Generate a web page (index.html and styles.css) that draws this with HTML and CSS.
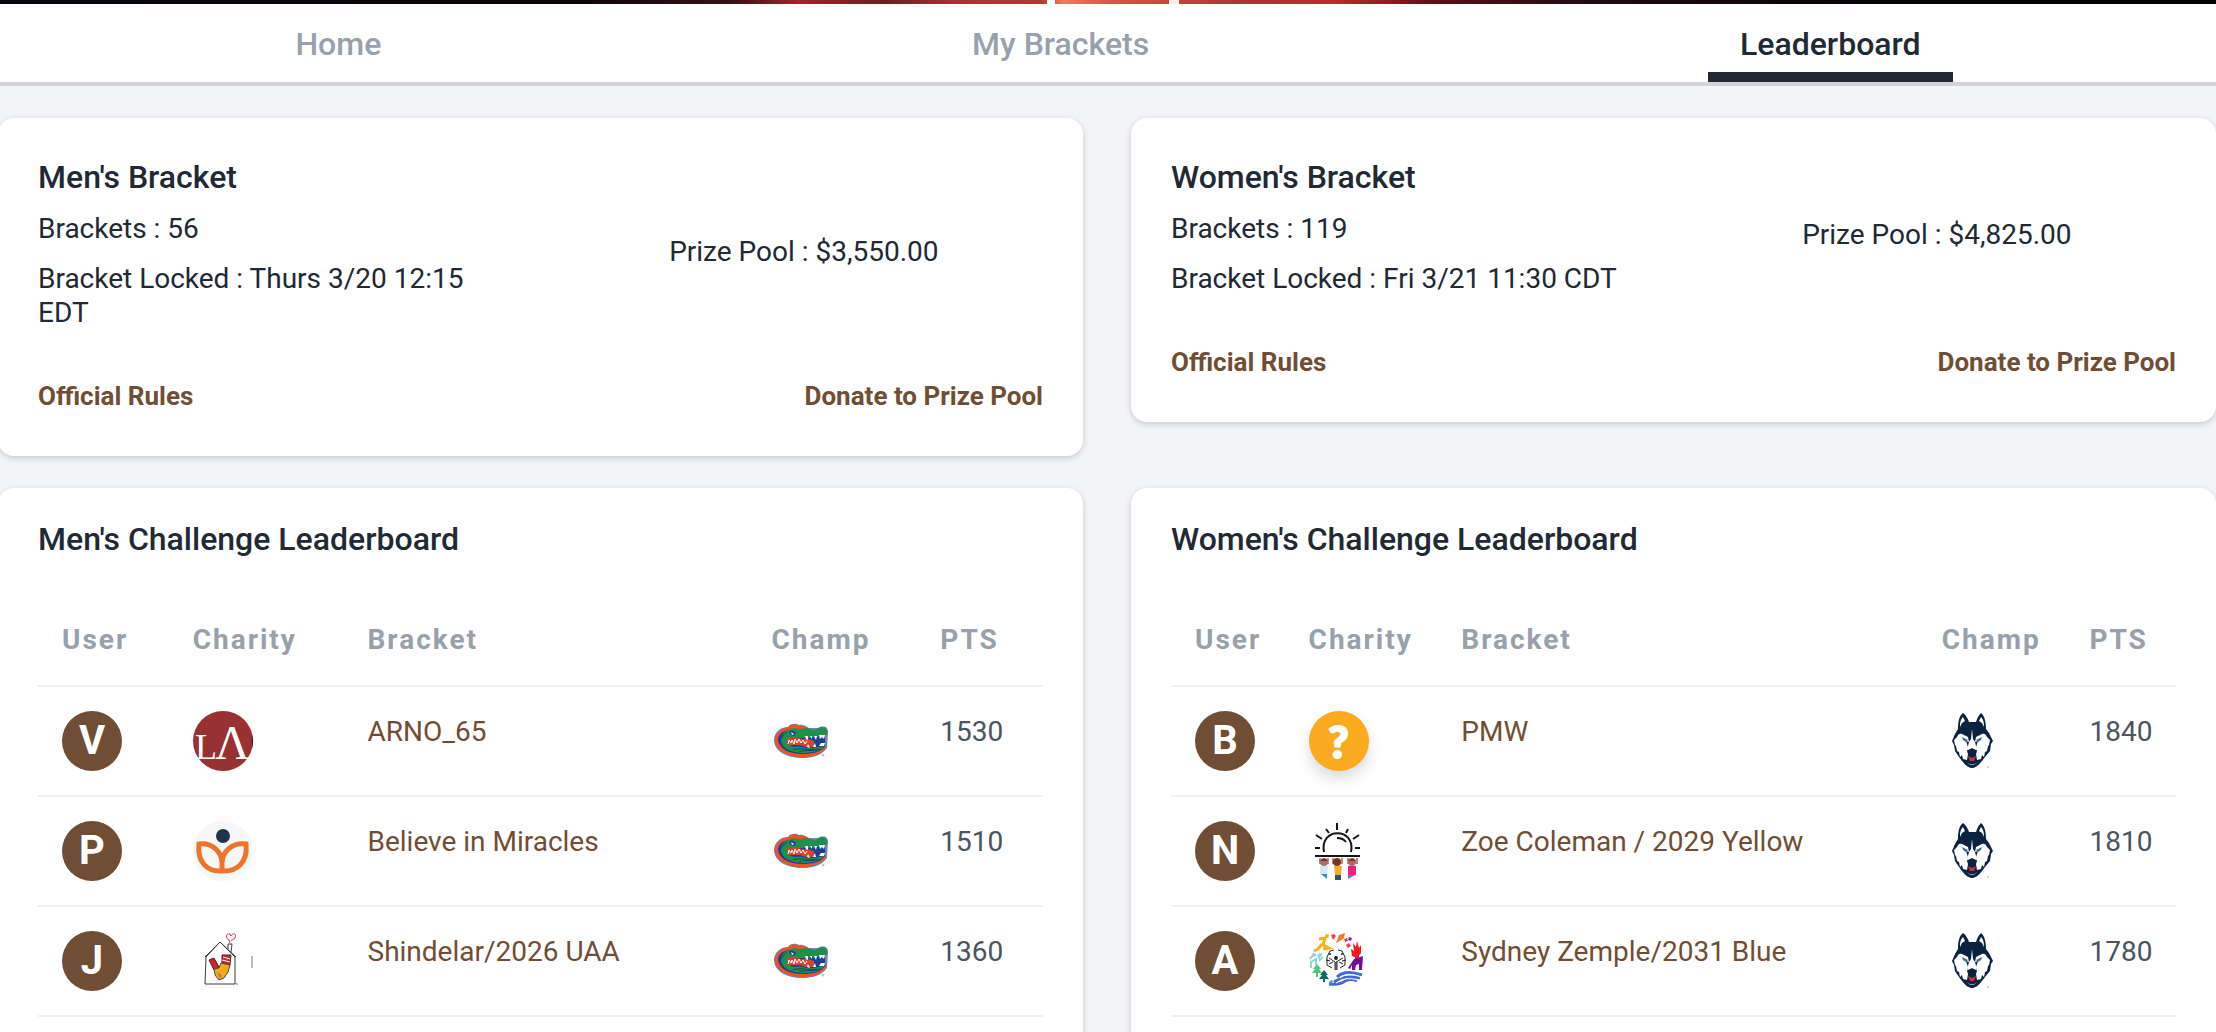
FILE: index.html
```html
<!DOCTYPE html>
<html lang="en">
<head>
  <meta charset="utf-8">
  <title>Leaderboard</title>
  <link rel="stylesheet" href="styles.css">
</head>
<body>
  <!-- shared logos -->
  <svg class="sprite" aria-hidden="true">
    <symbol id="gator" viewBox="0 0 60 60">
      <path d="M16 16 C18 12 24 12 27 14 C30 13 34 15 37 17 L46 17 C52 14 56 16 56 21 L55 37 C49 45 40 47 30 47 C15 47 2 40 2 29 C2 22 8 16 16 16Z" fill="#6f83b5"/>
      <path d="M17 16 C19 13 24 13 27 15 C30 14 35 16 37 18 L44 20 L52 30 L54 36 C49 44 40 46 30 46 C16 46 3 39 3 29 C3 23 9 17 17 16Z" fill="#f4511f"/>
      <path d="M17 19 C10 20 6 24 6 29 C7 38 18 43 30 43 C41 43 49 41 53 35 L53 26 L30 20Z" fill="#1d3f94"/>
      <path d="M9 29 C9 23 12 20 19 18 C23 16 26 19 30 18 C35 15 39 19 43 19 L49 16 C54 16 56 19 55 23 C53 26 48 25 45 26 L38 27 L17 27 C15 32 18 36 23 36 C28 34 33 38 41 37 L52 35 C49 40 41 42 30 42 C18 41 9 37 9 29Z" fill="#1f8f4c"/>
      <path d="M15 27 L22 26 L30 28 L36 28 L42 30 L42 36 L34 36 L28 34 L17 34Z" fill="#d9432f"/>
      <path d="M43 28 L53 25 L52 33 L43 34Z" fill="#1d3f94"/>
      <path d="M16 33 l1-4 2 3 1-3 2 4 1-5 2 4 2-4 2 4 2-3 2 4 2-3" fill="none" stroke="#fff" stroke-width="1"/>
      <path d="M33 25 h3 v4 l-2-1Z M38 25 h2 v3Z M42 25 h3 l-1 4Z M47 24 h6 l-1 4 -2-2 -2 2Z M35 36 l1-3 2 4Z M41 36 l2-4 1 4Z M47 35 l2-3 4 0 -1 3Z" fill="#fff"/>
      <path d="M17 21 C19 18 22 20 24 22 L22 25 L19 24Z" fill="#1d3f94"/>
      <path d="M19 21 l3 2 -2 1Z" fill="#fff"/>
      <path d="M9 28 Q11 23 15 21 M21 39 C28 36 36 40 46 38 M27 41 C34 38 42 41 49 38" fill="none" stroke="#174a70" stroke-width="1"/>
      <circle cx="51" cy="44" r="1" fill="none" stroke="#aab4cc" stroke-width="1"/>
    </symbol>

    <symbol id="husky" viewBox="0 0 60 60">
      <path d="M21 2 C24 4 26 8 27 11 H34 C35 7 37 4 39 2 C43 5 44 12 44 18 L47 22 L51 30 L49 33 L48 40 L43 46 L40 50 C36 55 33 57 30 57 C27 57 24 55 20 50 L17 46 L13 40 L12 34 L10 30 L13 23 L16 18 C16 11 17 5 21 2Z" fill="#0c2340"/>
      <path d="M21 6 C18 9 18 13 18 16 L20 12 L23 10Z M39 6 C42 9 42 13 42 16 L40 12 L37 10Z" fill="#fff"/>
      <path d="M30 18 L31 28 L33 31 L35 39 L32 39 L30 37 L28 39 L25 39 L27 31 L29 28Z" fill="#fff"/>
      <path d="M20 23 L26 26 L27 31 L24 30 L26 36 L25 40 L26 43 L25 49 L21 48 L20 44 L18 46 L17 41 L15 40 L14 35 L13 34 L12 29 L15 26 C16 23 18 22 20 23Z" fill="#fff"/>
      <path d="M40 23 L34 26 L33 31 L36 30 L34 36 L35 40 L34 43 L35 49 L39 48 L40 44 L42 46 L43 41 L45 40 L46 35 L47 34 L48 29 L45 26 C44 23 42 22 40 23Z" fill="#fff"/>
      <path d="M20 26 L26 29 L24 31 L21 29Z M40 26 L34 29 L36 31 L39 29Z" fill="#41708f"/>
      <path d="M26 39 Q30 36 34 39 L32 43 L30 44 L28 43Z" fill="#0c2340"/>
      <path d="M25 51 Q30 56 35 51 L33 53 Q30 55 27 53Z" fill="#fff"/>
      <path d="M26 45 L30 47 L34 45 L32 50 H28Z" fill="#c9303e"/>
      <path d="M45 56 h2" stroke="#aab0b8" stroke-width="1"/>
    </symbol>
  </svg>

  <div class="hero"></div>

  <nav class="tabs">
    <a href="#home">Home</a>
    <a href="#brackets">My Brackets</a>
    <a href="#leaderboard" class="active">Leaderboard</a>
  </nav>

  <main class="board">
    <section class="card summary">
      <div class="summary-top">
        <div class="info">
          <h2>Men's Bracket</h2>
          <p>Brackets : 56</p>
          <p>Bracket Locked : Thurs 3/20 12:15 EDT</p>
        </div>
        <div class="pool">Prize Pool : $3,550.00</div>
      </div>
      <div class="links">
        <a href="#rules">Official Rules</a>
        <a href="#donate">Donate to Prize Pool</a>
      </div>
    </section>

    <section class="card summary">
      <div class="summary-top">
        <div class="info">
          <h2>Women's Bracket</h2>
          <p>Brackets : 119</p>
          <p>Bracket Locked : Fri 3/21 11:30 CDT</p>
        </div>
        <div class="pool">Prize Pool : $4,825.00</div>
      </div>
      <div class="links">
        <a href="#rules">Official Rules</a>
        <a href="#donate">Donate to Prize Pool</a>
      </div>
    </section>

    <section class="card standings">
      <h2>Men's Challenge Leaderboard</h2>
      <table class="men">
        <colgroup><col class="c-user"><col class="c-charity"><col class="c-bracket"><col class="c-champ"><col class="c-pts"></colgroup>
        <thead>
          <tr><th>User</th><th>Charity</th><th>Bracket</th><th>Champ</th><th>PTS</th></tr>
        </thead>
        <tbody>
          <tr>
            <td><span class="avatar">V</span></td>
            <td>
              <svg class="charity" viewBox="0 0 60 60">
                <circle cx="30" cy="30" r="30" fill="#983132"/>
                <path d="M59 24 Q61 30 59 37Z" fill="#2a1010"/>
                <text class="la" x="2" y="48" font-size="36">L</text>
                <text class="la" x="22" y="48" font-size="48">Λ</text>
              </svg>
            </td>
            <td><a href="#b1">ARNO_65</a></td>
            <td><svg class="champ"><use href="#gator"/></svg></td>
            <td>1530</td>
          </tr>
          <tr>
            <td><span class="avatar">P</span></td>
            <td>
              <svg class="charity" viewBox="0 0 60 60">
                <circle cx="30" cy="30" r="30" fill="#f7f7f8"/>
                <circle cx="30" cy="15" r="7" fill="#1d334f"/>
                <path d="M29 50 C14 51 4 41 6 23 C19 21 29 31 29 42 C29 31 39 21 53 23 C55 41 44 51 29 50Z M29 41 L29 50" fill="none" stroke="#ee742b" stroke-width="5"/>
              </svg>
            </td>
            <td><a href="#b2">Believe in Miracles</a></td>
            <td><svg class="champ"><use href="#gator"/></svg></td>
            <td>1510</td>
          </tr>
          <tr>
            <td><span class="avatar">J</span></td>
            <td>
              <svg class="charity" viewBox="0 0 60 60">
                <path d="M12 53 L13 26 L27 11 L42 26 L42 53Z M12 26 L27 11 L43 26 M35 18 L35 13 L39 13 L38 21" fill="none" stroke="#3b3b3b" stroke-width="1"/>
                <path d="M37 12 L36 9 C32 7 33 2 37 3 L38 5 C40 1 44 3 42 7 L38 10" fill="none" stroke="#ec3347" stroke-width="1"/>
                <path d="M16 29 L21 27 L26 36 L21 39Z M29 24 L38 24 L37 34 L29 32Z" fill="#d3222d" stroke="#4d2525" stroke-width="1"/>
                <path d="M30 26 L37 28 M29 29 L37 31" stroke="#fff" stroke-width="1"/>
                <path d="M21 38 L26 37 L28 32 L37 34 L35 41 L31 47 L26 49 L22 44Z" fill="#f2a91c" stroke="#5a4635" stroke-width="1"/>
                <path d="M24 41 L29 44 L27 48Z" fill="#a48764"/>
                <path d="M43 53 L45 53 M59 25 L59 37" stroke="#777" stroke-width="1"/>
              </svg>
            </td>
            <td><a href="#b3">Shindelar/2026 UAA</a></td>
            <td><svg class="champ"><use href="#gator"/></svg></td>
            <td>1360</td>
          </tr>
        </tbody>
      </table>
    </section>

    <section class="card standings">
      <h2>Women's Challenge Leaderboard</h2>
      <table class="women">
        <colgroup><col class="c-user"><col class="c-charity"><col class="c-bracket"><col class="c-champ"><col class="c-pts"></colgroup>
        <thead>
          <tr><th>User</th><th>Charity</th><th>Bracket</th><th>Champ</th><th>PTS</th></tr>
        </thead>
        <tbody>
          <tr>
            <td><span class="avatar">B</span></td>
            <td><span class="avatar unknown">?</span></td>
            <td><a href="#b4">PMW</a></td>
            <td><svg class="champ"><use href="#husky"/></svg></td>
            <td>1840</td>
          </tr>
          <tr>
            <td><span class="avatar">N</span></td>
            <td>
              <svg class="charity" viewBox="0 0 60 60">
                <path d="M15 31 C10 6 47 6 42 31 M28 17 Q34 17 37 21 M28 2 V9 M17 8 L20 12 M39 8 L37 12 M7 14 L13 18 M50 14 L44 18 M6 27 H11 M46 27 H51" fill="none" stroke="#151515" stroke-width="2"/>
                <path d="M6 35 H51" stroke="#151515" stroke-width="2"/>
                <path d="M11 37 V43 M19 37 V43 M24 37 V43 M33 37 V43 M39 37 V43 M48 37 V43" stroke="#c98677" stroke-width="2"/>
                <path d="M11 45 H19 L18 56 L11 53Z" fill="#d5e8f6"/>
                <path d="M12 53 H18 V58Z" fill="#3f8db5"/>
                <path d="M25 45 H33 L32 54 H26Z" fill="#f7ad2d"/>
                <path d="M26 54 H32 V59 H26Z" fill="#345269"/>
                <path d="M39 45 H47 V54 H39Z" fill="#ef1d86"/>
                <path d="M39 54 H46 L39 58Z" fill="#3f8db5"/>
                <circle cx="15" cy="41" r="4" fill="#a6716b"/>
                <circle cx="28" cy="41" r="4" fill="#6e3a25"/>
                <circle cx="43" cy="41" r="4" fill="#b0686a"/>
                <path d="M11 40 Q15 35 19 40Z M39 40 Q43 35 47 40Z" fill="#6e3a35"/>
              </svg>
            </td>
            <td><a href="#b5">Zoe Coleman / 2029 Yellow</a></td>
            <td><svg class="champ"><use href="#husky"/></svg></td>
            <td>1810</td>
          </tr>
          <tr>
            <td><span class="avatar">A</span></td>
            <td>
              <svg class="charity" viewBox="0 0 60 60">
                <g fill="none" stroke="#f7b11a" stroke-width="3"><path d="M10 8 L16 7 L14 14 L20 17 L14 18 M13 13 L9 18 L5 20"/></g>
                <circle cx="18" cy="5" r="2" fill="#f7b11a"/>
                <path d="M22 4 l3-1 2 2 -3 4Z" fill="#ee4056"/>
                <path d="M27 12 L30 4 L36 2 L35 7 L31 10Z" fill="#f47b20"/>
                <path d="M40 6 l3 1 -1 3 -3-1Z" fill="#7d2aa3"/>
                <path d="M37 14 l3-2 2 3 -3 2Z M35 8 l3-1 1 3 -3 1Z" fill="#ee4056"/>
                <path d="M42 18 L45 20 L44 12 L47 16 L48 10 L50 17 L52 14 L52 22 L48 27 L43 25Z M46 25 H50 V28 H46Z" fill="#f4191c"/>
                <path d="M39 37 L45 28 L54 25 L53 39 H50 V33 L47 34 L46 39 H43 V34 L41 38Z" fill="#71109a"/>
                <path d="M28 46 Q36 38 53 44 M25 51 Q37 43 51 47 M20 53 Q32 54 36 50 Q42 47 48 50" fill="none" stroke="#4668d8" stroke-width="3"/>
                <path d="M31 47 Q37 41 53 46 M27 52 Q36 45 49 49" fill="none" stroke="#fff" stroke-width="1"/>
                <path d="M1 28 L4 24 L7 24 M2 30 V37 M2 31 L7 28 V34 M9 24 L11 29 L14 26" fill="none" stroke="#8ddbd0" stroke-width="2"/>
                <circle cx="5" cy="24" r="2" fill="#8ddbd0"/><circle cx="11" cy="24" r="2" fill="#8ddbd0"/>
                <path d="M8 33 L12 38 H10 L13 42 H9 V46 H7 V42 H3 L6 38 H4Z" fill="#55c47d"/>
                <path d="M15 39 L19 44 H17 L20 48 H16 V51 H14 V48 H10 L13 44 H11Z" fill="#096b5b"/>
                <path d="M20 51 l3-2 1 2 -3 2Z" fill="#25afb2"/>
                <g fill="none" stroke="#222" stroke-width="1"><path d="M26 39 V31 L20 27 M27 39 V31 L34 27 M28 39 V31 M23 37 L18 34 V26 L21 20 L25 19 M31 37 L36 34 V26 L33 20 L29 19 M20 33 L24 31 M34 33 L30 31 M17 29 L21 30 M37 29 L33 30"/></g>
                <circle cx="27" cy="27" r="2" fill="#222"/><circle cx="21" cy="23" r="1" fill="#222"/><circle cx="33" cy="23" r="1" fill="#222"/>
              </svg>
            </td>
            <td><a href="#b6">Sydney Zemple/2031 Blue</a></td>
            <td><svg class="champ"><use href="#husky"/></svg></td>
            <td>1780</td>
          </tr>
        </tbody>
      </table>
    </section>
  </main>
</body>
</html>
```
FILE: styles.css
```css
* {
  box-sizing: border-box;
}

body {
  margin: 0;
  background: #f3f4f7;
  color: #212934;
  font-family: Roboto, sans-serif;
  font-size: 28px;
  line-height: 34px;
  overflow-x: hidden;
}

a {
  color: #704e35;
  text-decoration: none;
}

h2 {
  margin: 0;
  font-size: 32px;
  font-weight: 500;
  line-height: 38px;
}

.sprite {
  display: none;
}

.hero {
  height: 4px;
  background:
    linear-gradient(#fff, #fff) 47.4% 0 / 8px 4px no-repeat,
    linear-gradient(#f6eee6, #f6eee6) 53% 0 / 10px 4px no-repeat,
    linear-gradient(90deg, #08040f 0%, #0b0408 26%, #3a1016 33%, #98282b 36%, #6c1d1f 40%, #a23434 43%, #a93d32 47%, #fa7460 48%, #dc5546 50%, #cf4a39 52%, #ab3436 56%, #c02c28 60%, #571019 65%, #200a12 72%, #060308 84%, #000 100%);
}

.tabs {
  display: flex;
  justify-content: space-around;
  height: 82px;
  background: #fff;
  border-bottom: 4px solid #d2d4d8;
}

.tabs a {
  padding: 21px 32px 0;
  border-bottom: 10px solid transparent;
  color: #97a1ab;
  font-size: 32px;
  font-weight: 500;
  line-height: 38px;
}

.tabs a.active {
  color: #212934;
  border-bottom-color: #212934;
}

.board {
  display: grid;
  grid-template-columns: 1fr 1fr;
  gap: 32px 48px;
  align-items: start;
  margin: 32px 0 32px -2px;
}

.card {
  background: #fff;
  border-radius: 16px;
  box-shadow: 0 2px 6px rgba(30, 35, 60, 0.2);
}

.summary {
  padding: 40px;
}

.summary-top {
  display: grid;
  grid-template-columns: 62.8% 1fr;
  align-items: center;
}

.info {
  padding-right: 168px;
}

.info h2 {
  margin-bottom: 16px;
}

.info p {
  margin: 0 0 16px;
}

.links {
  display: flex;
  justify-content: space-between;
  margin-top: 30px;
  font-size: 26px;
  font-weight: 700;
  line-height: 40px;
}

.standings {
  padding: 32px 40px;
}

.standings h2 {
  margin-bottom: 37px;
}

table {
  width: 100%;
  border-collapse: separate;
  border-spacing: 0;
  table-layout: fixed;
}

th,
td {
  padding: 24px 0 24px 24px;
  border-bottom: 2px solid #edf1f6;
  line-height: 42px;
  text-align: left;
  vertical-align: top;
}

th {
  color: #97a1ab;
  font-weight: 700;
  letter-spacing: 2px;
}

td {
  color: #4b545f;
}

.men .c-user { width: 13%; }
.men .c-charity { width: 17.4%; }
.men .c-bracket { width: 40.2%; }
.men .c-champ { width: 16.8%; }

.women .c-user { width: 11.3%; }
.women .c-charity { width: 15.2%; }
.women .c-bracket { width: 47.8%; }
.women .c-champ { width: 14.7%; }

.avatar,
.charity,
.champ {
  display: block;
  width: 60px;
  height: 60px;
}

.avatar {
  border-radius: 50%;
  background: #704e35;
  color: #fff;
  font-size: 40px;
  font-weight: 700;
  line-height: 60px;
  text-align: center;
}

.unknown {
  background: #fbab20;
  box-shadow: 0 8px 14px rgba(0, 0, 0, 0.14);
  font-family: Lato, sans-serif;
  font-size: 44px;
  font-weight: 900;
  -webkit-text-stroke: 2px #fff;
}

.la {
  fill: #fff;
  font-family: "Liberation Serif", serif;
}
```
